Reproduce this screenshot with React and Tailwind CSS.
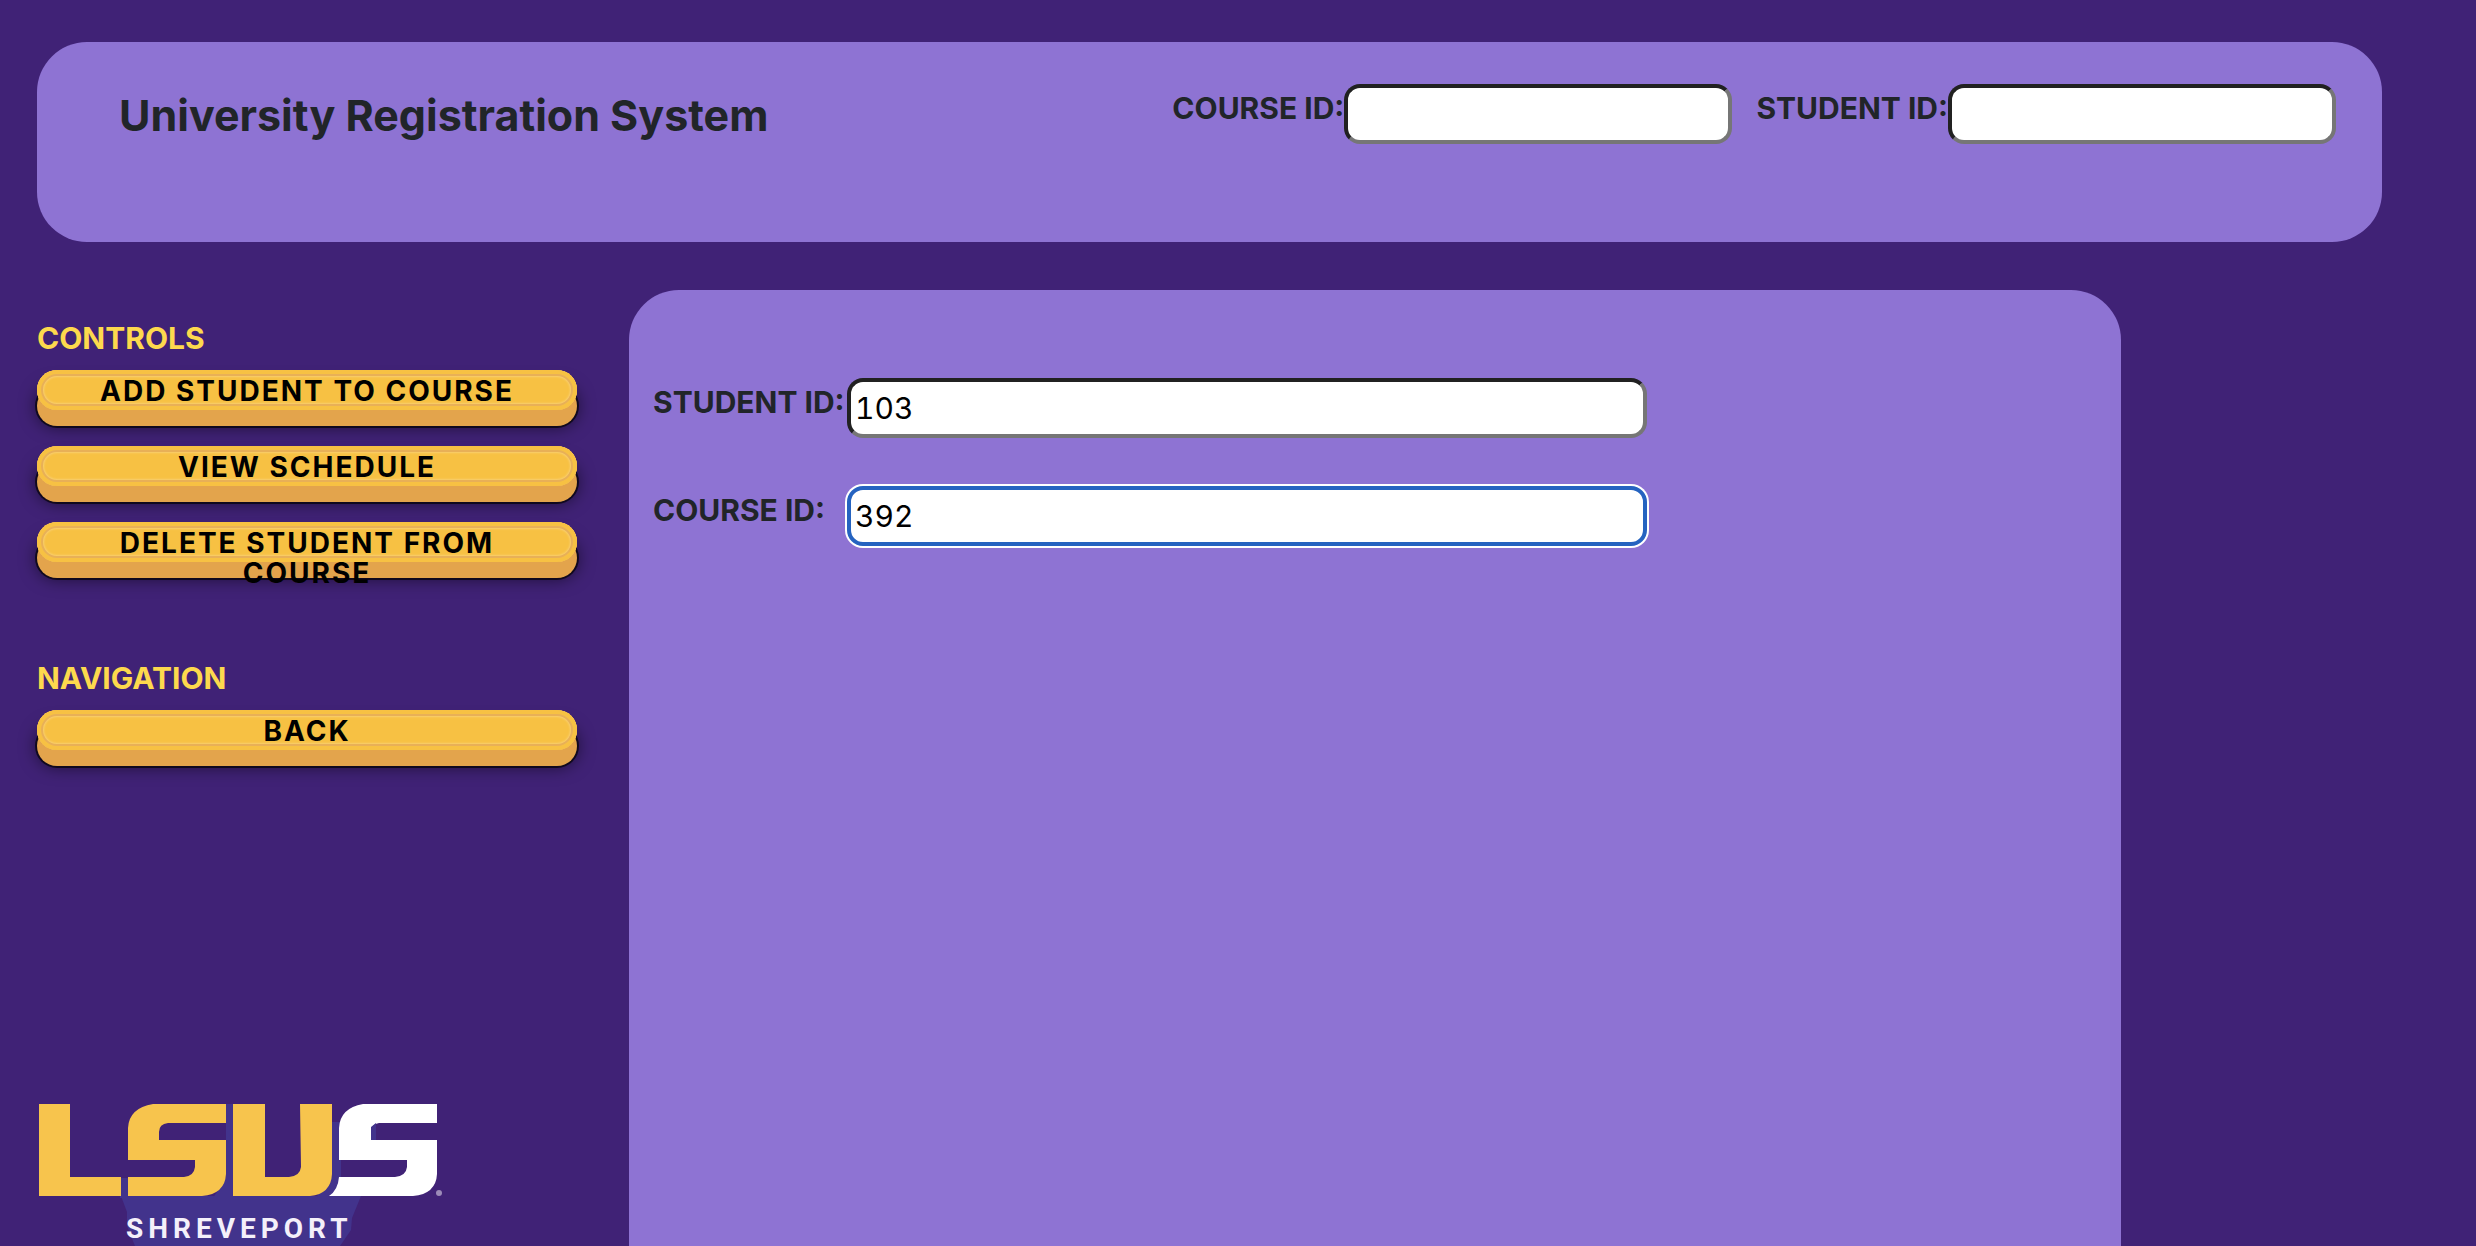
import { useId } from 'react';

const fieldBase =
  'h-[60px] rounded-[16px] border-4 bg-white px-1 text-[30px] tabular-nums text-black outline-none';
const insetBorder =
  'border-t-[#212121] border-l-[#212121] border-b-[#767676] border-r-[#767676]';

function HeaderField({ label }) {
  const id = useId();
  return (
    <div className="flex items-start">
      <label htmlFor={id} className="text-[30px] font-bold leading-[48px] whitespace-nowrap">
        {label}
      </label>
      <input id={id} type="text" className={`${fieldBase} ${insetBorder} w-[388px]`} />
    </div>
  );
}

function FormRow({ label, value, active }) {
  const id = useId();
  return (
    <div className="flex items-start">
      <label
        htmlFor={id}
        className="w-[194px] shrink-0 text-[30px] font-bold leading-[48px] whitespace-nowrap"
      >
        {label}
      </label>
      <input
        id={id}
        type="text"
        defaultValue={value}
        className={`${fieldBase} w-full max-w-[800px] ${
          active ? 'border-[#2563c0] ring-2 ring-white' : insetBorder
        }`}
      />
    </div>
  );
}

function ActionButton({ children }) {
  return (
    <button
      type="button"
      className="flex h-10 w-full items-start justify-center rounded-[20px] bg-[#f7c143] px-6 pt-[6px] text-center text-[28px] font-bold leading-[30px] tracking-[2px] text-black shadow-[inset_0_0_0_4px_#f7c143,inset_0_0_0_6px_#e8b057,inset_0_0_2px_7px_#f9cf70,0_16px_0_0_#e3a44c,0_16px_0_2px_rgba(0,0,0,0.65),0_16px_16px_2px_rgba(0,0,0,0.5)]"
    >
      {children}
    </button>
  );
}

function Section({ title, children }) {
  return (
    <section>
      <h2 className="mb-2 text-[30px] font-bold leading-[48px] text-[#fdd94d]">{title}</h2>
      <div className="flex flex-col gap-9">{children}</div>
    </section>
  );
}

function Logo() {
  return (
    <svg
      viewBox="0 0 410 146"
      className="w-[410px] max-w-full"
      role="img"
      aria-label="LSUS Shreveport"
    >
      <path d="M84 96H324L315 118L314 130L303 146H98L90 126V112Z" fill="#42338c" />
      <path d="M83 78h9v20h-9zM189 4h7v94h-20l13-20zM295 22h9v60l-12 16h-12z" fill="#42338c" />
      <g fill="#f7c44d">
        <path d="M2 4H33V77H84V96H2Z" />
        <path d="M116 4H189V23H131Q122 24 122 32V40H189V74Q188 94 165 96H91V77H147Q157 76 158 67V60H91V28Q92 8 116 4Z" />
        <path d="M196 4H228V77H252Q263 76 264 67L263 4H295V74Q294 94 273 96H196Z" />
      </g>
      <path
        d="M326 4H400V23H342Q334 24 334 32V40H400V74Q399 94 376 96H292Q301 90 302 77H358Q369 76 370 67V60H302V28Q303 8 326 4Z"
        fill="#fff"
      />
      <path d="M334 27l5-4v17h-5z" fill="#42338c" />
      <circle cx="402" cy="93" r="3" fill="#9c8bb8" />
      <text x="89" y="138" fill="#f4f0fa" className="font-['Roboto',sans-serif] text-[28px] font-bold tracking-[5px]">
        SHREVEPORT
      </text>
    </svg>
  );
}

export default function App() {
  return (
    <div className="flex min-h-screen flex-col gap-12 bg-[#402276] pt-[42px] pl-[37px] font-['Inter',sans-serif] text-[#212529]">
      <header className="mr-[94px] flex min-h-[200px] items-start justify-between rounded-[50px] bg-[#8e73d3] pt-[42px] pr-[46px] pl-[82px]">
        <h1 className="text-[43px] font-bold leading-[62px]">University Registration System</h1>
        <div className="flex gap-6">
          <HeaderField label="COURSE ID:" />
          <HeaderField label="STUDENT ID:" />
        </div>
      </header>

      <div className="mr-[355px] flex flex-1 gap-[52px]">
        <aside className="flex w-[540px] shrink-0 flex-col pt-6">
          <div className="flex flex-col gap-[92px]">
            <Section title="CONTROLS">
              <ActionButton>ADD STUDENT TO COURSE</ActionButton>
              <ActionButton>VIEW SCHEDULE</ActionButton>
              <ActionButton>DELETE STUDENT FROM COURSE</ActionButton>
            </Section>
            <Section title="NAVIGATION">
              <ActionButton>BACK</ActionButton>
            </Section>
          </div>
          <div className="mt-auto">
            <Logo />
          </div>
        </aside>

        <main className="flex flex-1 flex-col gap-12 rounded-t-[50px] bg-[#8e73d3] pt-[88px] pl-6">
          <FormRow label="STUDENT ID:" value="103" />
          <FormRow label="COURSE ID:" value="392" active />
        </main>
      </div>
    </div>
  );
}
